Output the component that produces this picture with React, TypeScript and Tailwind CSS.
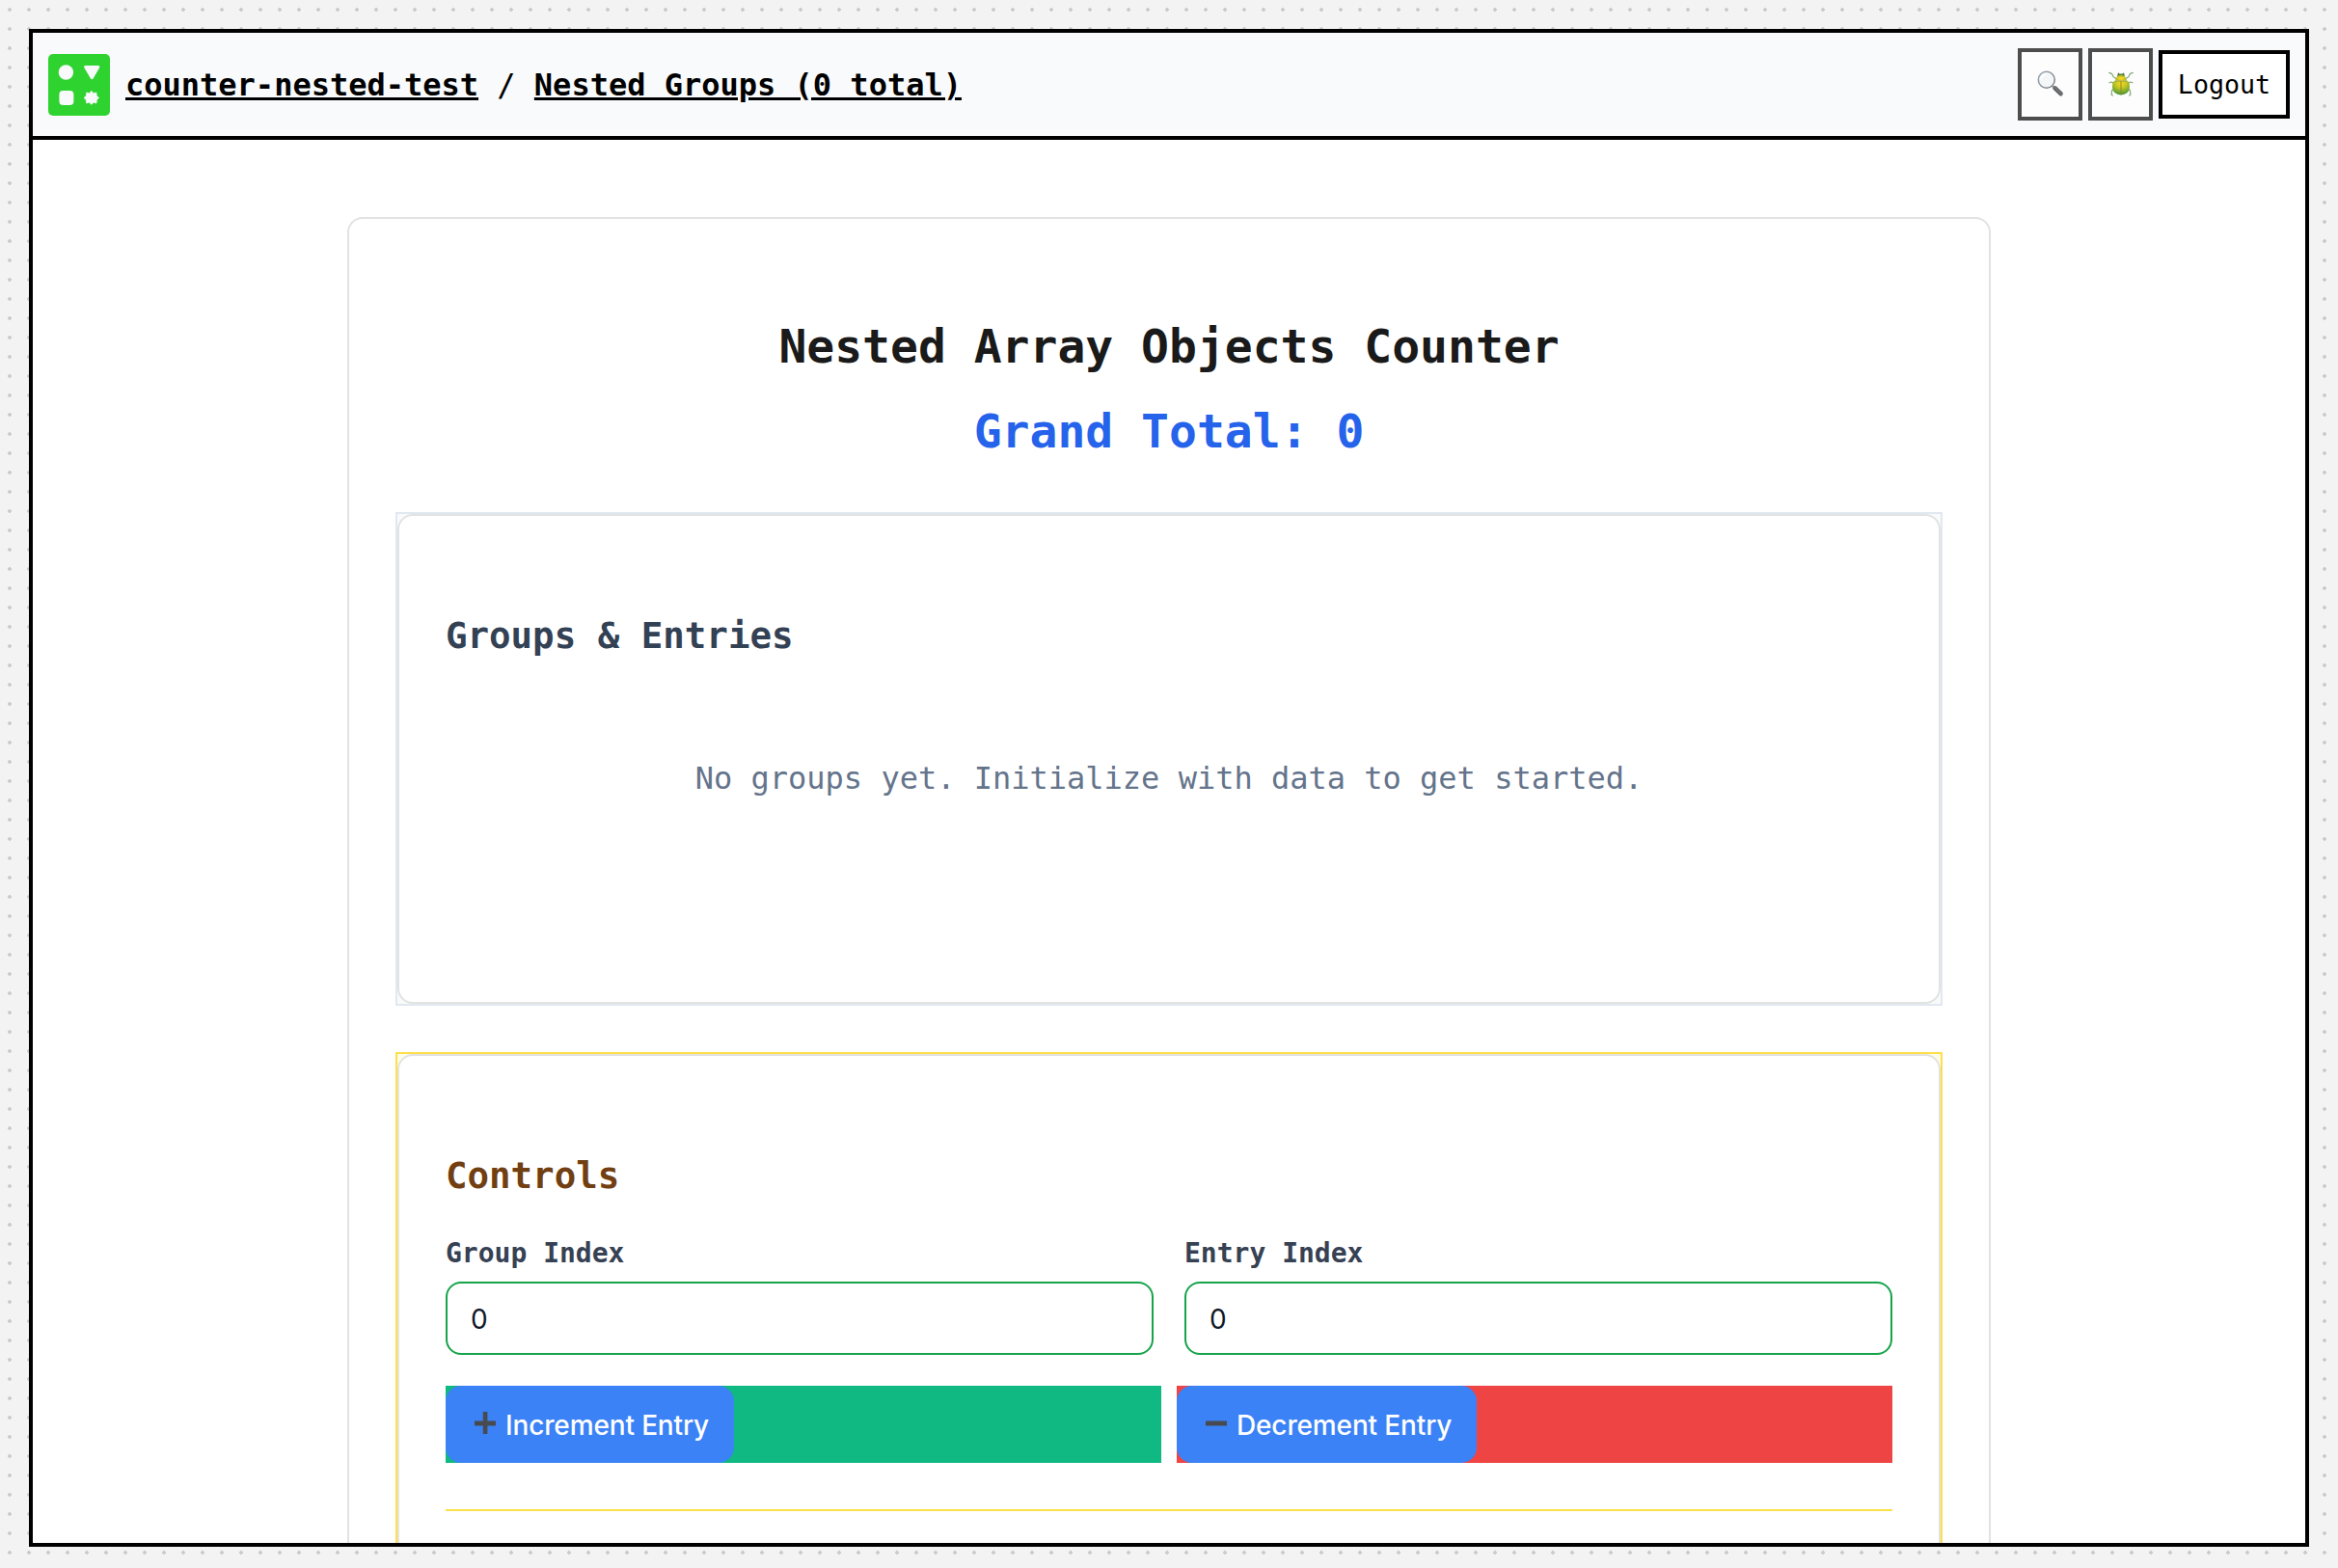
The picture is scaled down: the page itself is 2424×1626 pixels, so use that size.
import type { ReactNode } from "react";

const mono = "font-['DejaVu_Sans_Mono',monospace]";

function Logo() {
  return (
    <svg viewBox="0 0 64 64" className="size-16 shrink-0">
      <rect width="64" height="64" rx="5" fill="#2fd32f" />
      <g fill="#f8fafc">
        <circle cx="18.4" cy="19" r="7.7" />
        <path d="M38.6 12h13.2c1.2 0 1.9 1 1.4 2l-6.6 11.6c-.6 1-2 1-2.6 0L37.2 14c-.5-1 .2-2 1.4-2z" />
        <rect x="11.4" y="38" width="15" height="15" rx="4" />
        <path
          d="M44.8 38.2L46.9 40.7L50 40L50.200 43.200L52.600 45.400L50.400 47.500L50 51L46.900 50.300L44.800 52.400L42.700 50.300L39.600 51L39.200 47.500L37 45.400L39.400 43.200L39.600 40L42.700 40.700Z"
          stroke="#f8fafc"
          strokeWidth=".6"
          strokeLinejoin="round"
        />
      </g>
    </svg>
  );
}

function SearchIcon() {
  return (
    <svg viewBox="0 0 28 28" className="size-7">
      <defs>
        <linearGradient id="handle" x1="0" y1="1" x2="1" y2="0">
          <stop offset="0" stopColor="#3c3f42" />
          <stop offset=".55" stopColor="#74787b" />
          <stop offset="1" stopColor="#45484b" />
        </linearGradient>
        <linearGradient id="rim" x1="0" y1="0" x2="1" y2="1">
          <stop offset="0" stopColor="#9aaab8" />
          <stop offset="1" stopColor="#74797e" />
        </linearGradient>
      </defs>
      <path d="M16.2 16.2l3 3" stroke="#85898c" strokeWidth="2" />
      <path d="M18.6 18.4l6 5.8" stroke="url(#handle)" strokeWidth="4.6" strokeLinecap="round" />
      <circle cx="9.8" cy="9.8" r="8.5" fill="#f4f6f8" stroke="url(#rim)" strokeWidth="1.5" />
      <path d="M4.2 9.2a5.8 5.8 0 0 1 5-5" fill="none" stroke="#fff" strokeWidth="1.6" strokeLinecap="round" />
    </svg>
  );
}

function BeetleIcon() {
  return (
    <svg viewBox="0 0 28 28" className="size-7">
      <defs>
        <radialGradient id="shell" cx=".5" cy=".2" r=".75">
          <stop offset="0" stopColor="#f8d81c" />
          <stop offset=".4" stopColor="#c9c726" />
          <stop offset="1" stopColor="#4f9a35" />
        </radialGradient>
        <radialGradient id="thorax" cx=".5" cy=".6" r=".6">
          <stop offset="0" stopColor="#fbe11f" />
          <stop offset=".6" stopColor="#d5c321" />
          <stop offset="1" stopColor="#5f9c35" />
        </radialGradient>
      </defs>
      <g fill="none" stroke="#82a873" strokeWidth="1.2" strokeLinecap="round" strokeLinejoin="round">
        <path d="M9 8.4L6.2 6.800L4.600 3.600L1.800 2.400" />
        <path d="M19 8.400l2.800-1.600l1.600-3.200l2.800-1.200" />
        <path d="M6.600 13.600L4.200 12L2 12.800" />
        <path d="M21.400 13.600l2.400-1.600l2.200.8" />
        <path d="M7 19L4.600 20.800L4.200 25L5.200 26" />
        <path d="M21 19l2.400 1.800l.4 4.200l-1 1" />
      </g>
      <path d="M10.200 6.200c0-2 .6-3.200 1.200-4l1 1.200h3.200l1-1.200c.6.8 1.200 2 1.200 4z" fill="#55783a" />
      <path d="M8.200 10.600C8.800 7 11 4.600 14 4.600s5.200 2.400 5.800 6z" fill="url(#thorax)" />
      <path d="M6 11.800c1.400-1.800 14.600-1.800 16 0c2.600 6.600.2 13.400-8 13.600C5.800 25.200 3.400 18.400 6 11.800z" fill="url(#shell)" />
      <path d="M14 11v14.200" stroke="#8d8422" strokeWidth=".9" />
      <path d="M7.400 11h13.200" stroke="#8e9730" strokeWidth=".7" />
    </svg>
  );
}

function IconButton({ children }: { children: ReactNode }) {
  return (
    <button className="flex h-[75px] w-[67px] items-center justify-center border-4 border-[#4d4d4d] bg-[#fdfdfd] pb-0.5">
      {children}
    </button>
  );
}

function Panel({ frame, children }: { frame: string; children: ReactNode }) {
  return (
    <section className={`border-2 ${frame}`}>
      <div className="h-full rounded-2xl border-2 border-[#e2e2e2] bg-white px-12 pt-[102px]">{children}</div>
    </section>
  );
}

function Field({ label }: { label: string }) {
  return (
    <label className="flex flex-1 flex-col gap-[13px]">
      <span className="pt-px text-[28px] leading-8 font-bold text-gray-700">{label}</span>
      <input
        defaultValue="0"
        className="h-[76px] w-full rounded-2xl border-2 border-[#16a34a] bg-white px-6 pt-px font-['Inter',sans-serif] text-[28px] text-gray-900 outline-none"
      />
    </label>
  );
}

function Action({ label, minus, track }: { label: string; minus?: boolean; track: string }) {
  return (
    <div className={`flex flex-1 ${track}`}>
      <button className="flex h-20 items-center rounded-2xl bg-[#3b82f6] pt-px pr-[26px] pl-[29px] font-['Inter',sans-serif] text-[28px] font-medium tracking-[-0.14px] text-white">
        <svg viewBox="0 0 24 34" className="mr-[9px] h-[34px] w-6 shrink-0">
          <path
            d={minus ? "M1 12.500h22v5H1z" : "M1 12.500h8.800v-9.500h4.600v9.500H23v5h-8.600V26H9.800v-8.500H1z"}
            fill="#474b50"
          />
        </svg>
        {label}
      </button>
    </div>
  );
}

export default function App() {
  return (
    <div
      className={`h-[1626px] w-[2424px] overflow-hidden bg-[#f3f3f3] bg-[radial-gradient(circle,#ccc_2px,transparent_2px)] bg-[size:20px_20px] px-[30px] pt-[30px] pb-[22px] ${mono}`}
    >
      <div className="flex h-full flex-col overflow-hidden border-4 border-black bg-white">
        <header className="flex h-[111px] shrink-0 items-center border-b-4 border-black bg-[#f8fafc] px-4">
          <Logo />
          <nav className="ml-4 text-[32px] leading-9 whitespace-pre text-black">
            <a className="font-bold underline decoration-[3px] underline-offset-[2px]">counter-nested-test</a>
            {" / "}
            <a className="font-bold underline decoration-[3px] underline-offset-[2px]">Nested Groups (0 total)</a>
          </nav>
          <div className="ml-auto flex items-center gap-1.5">
            <IconButton>
              <SearchIcon />
            </IconButton>
            <IconButton>
              <BeetleIcon />
            </IconButton>
            <button className="h-[71px] w-[136px] border-4 border-black bg-white text-[26.67px] text-black">
              Logout
            </button>
          </div>
        </header>

        <main className="mx-auto mt-20 h-[1600px] w-[1704px] shrink-0 rounded-2xl border-2 border-[#e2e2e2] bg-white px-12 pt-[104px]">
          <div className="text-center text-5xl leading-[56px] font-bold">
            <h1 className="text-[#1a1a1a]">Nested Array Objects Counter</h1>
            <p className="mt-8 text-[#2563eb]">Grand Total: 0</p>
          </div>

          <div className="mt-14 grid grid-rows-[512px_900px] gap-12">
            <Panel frame="border-slate-200 bg-slate-50">
              <h2 className="text-[37.44px] leading-[44px] font-bold text-[#334155]">Groups &amp; Entries</h2>
              <p className="mt-[108px] text-center text-[32px] leading-9 text-[#64748b]">
                No groups yet. Initialize with data to get started.
              </p>
            </Panel>
            <Panel frame="border-[#fde047] bg-[#fefce8]">
              <h2 className="text-[37.44px] leading-[44px] font-bold text-[#713f12]">Controls</h2>
              <div className="mt-[42px] flex gap-8">
                <Field label="Group Index" />
                <Field label="Entry Index" />
              </div>
              <div className="mt-8 flex gap-4">
                <Action label="Increment Entry" track="bg-[#10b981]" />
                <Action label="Decrement Entry" minus track="bg-[#ef4444]" />
              </div>
              <hr className="mt-12 border-t-2 border-[#fde047]" />
            </Panel>
          </div>
        </main>
      </div>
    </div>
  );
}
